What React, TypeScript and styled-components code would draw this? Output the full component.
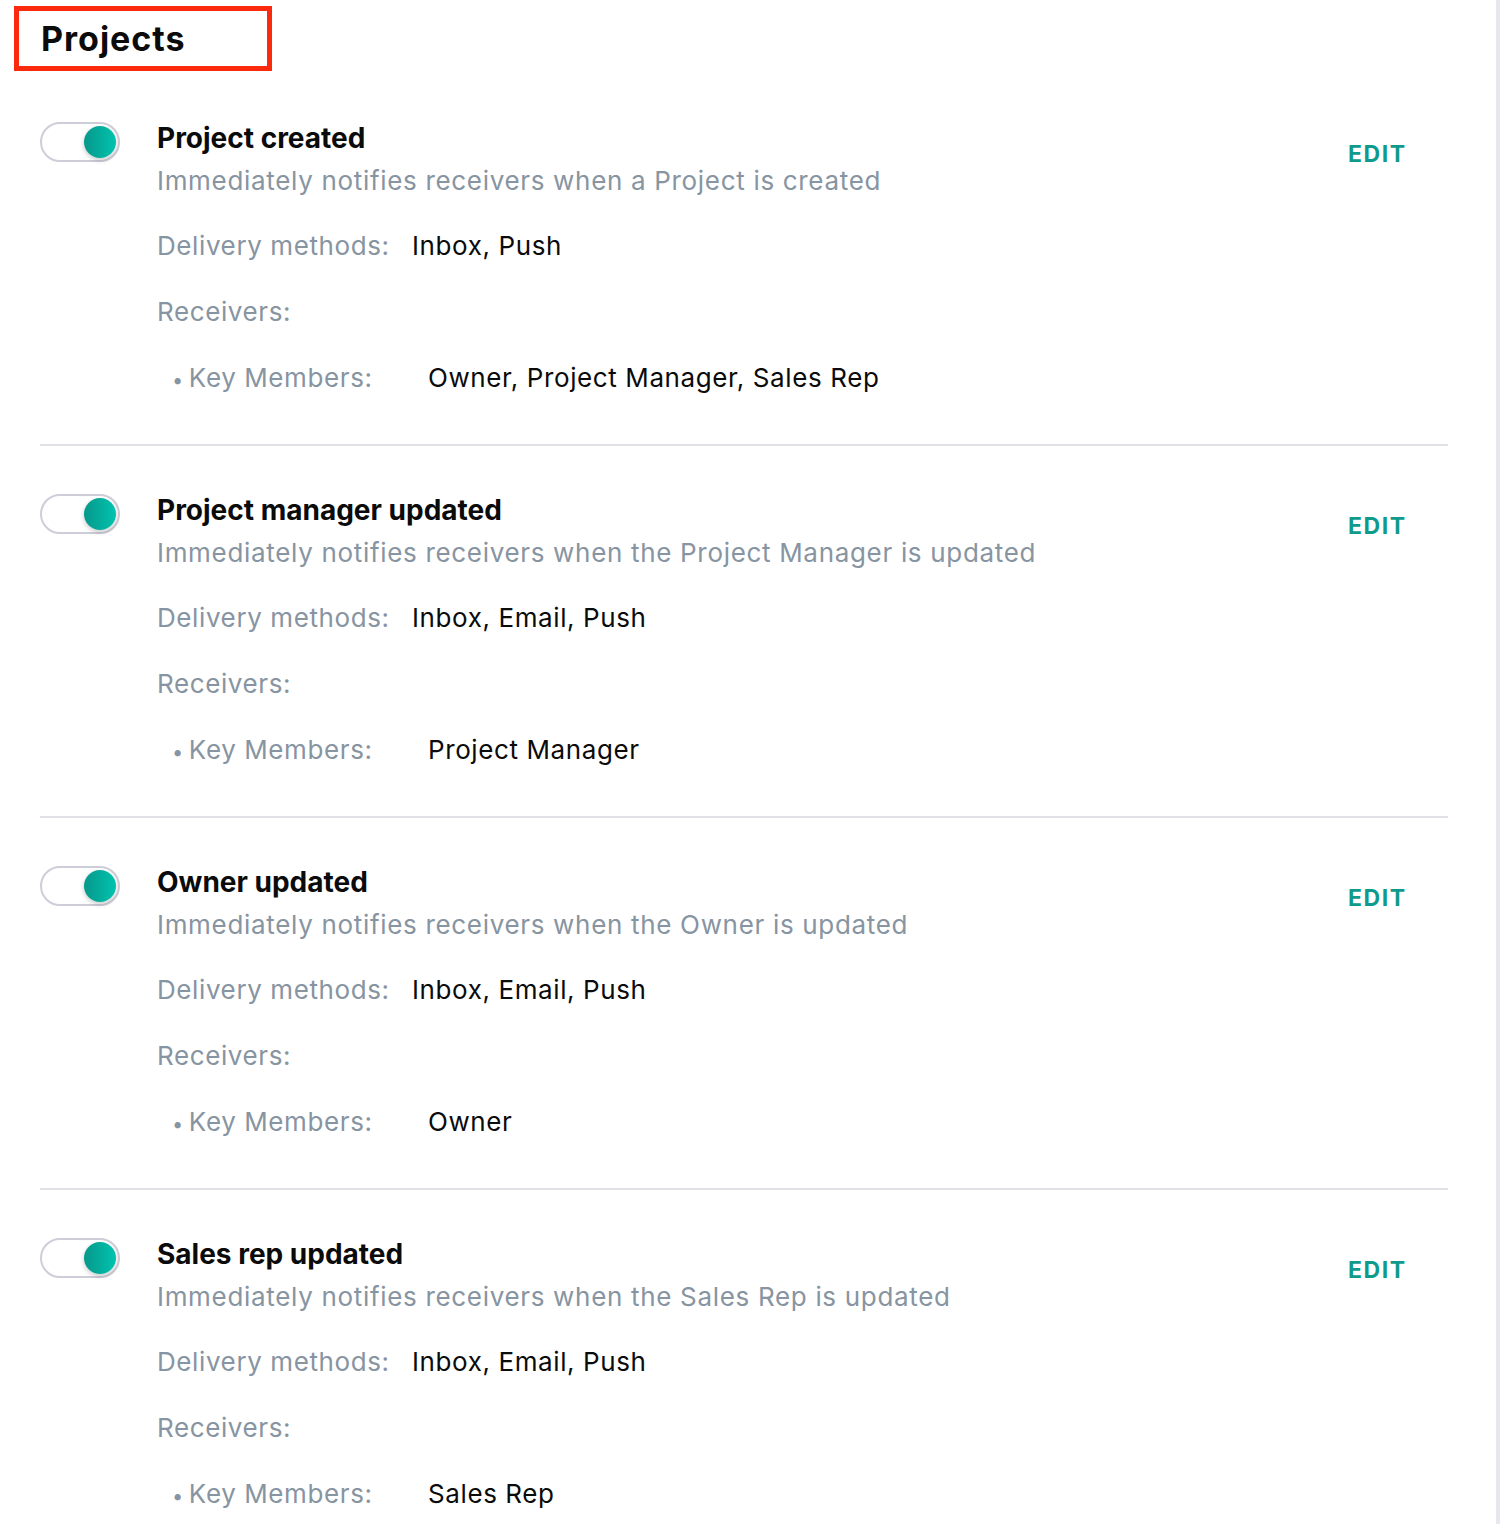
import React from "react";
import styled, { createGlobalStyle } from "styled-components";

const Global = createGlobalStyle`
  html, body { margin: 0; padding: 0; background: #ffffff; }
  body { font-family: Inter, "Open Sans", "Liberation Sans", sans-serif; -webkit-font-smoothing: antialiased; }
  * { box-sizing: border-box; }
`;

const Page = styled.div`
  width: 1500px;
  min-height: 1524px;
  border-right: 4px solid #e8e7ef;
  padding: 6px 48px 0 0;
`;

const HeaderBox = styled.div`
  margin-left: 14px;
  width: 258px;
  height: 65px;
  border: 5px solid #fb2a0c;
  padding-left: 22px;
  display: flex;
  align-items: center;
`;

const PageTitle = styled.h1`
  margin: 0;
  font-size: 34px;
  font-weight: 700;
  letter-spacing: 1px;
  color: #0b0b0b;
`;

const List = styled.div`
  margin-top: 51px;
  padding-left: 40px;
`;

const Section = styled.section<{ $first?: boolean; $last?: boolean }>`
  display: flex;
  align-items: flex-start;
  padding: ${(p) => (p.$first ? "0" : "48px")} 0 48px 0;
  border-bottom: ${(p) => (p.$last ? "none" : "2px solid #e2e1e8")};
`;

const Track = styled.div`
  flex: none;
  width: 80px;
  height: 40px;
  border: 2px solid #cfcdd8;
  border-radius: 20px;
  background: #ffffff;
  position: relative;
  margin-right: 37px;
`;

const Knob = styled.div`
  position: absolute;
  right: 2px;
  top: 2px;
  width: 32px;
  height: 32px;
  border-radius: 50%;
  background: linear-gradient(90deg, #07988a 0%, #00c3af 100%);
  box-shadow: 0 2px 5px rgba(0, 0, 0, 0.22);
`;

const Body = styled.div`
  flex: 1;
  display: flex;
  flex-direction: column;
`;

const Title = styled.h2`
  margin: 0;
  height: 32px;
  font-size: 28px;
  line-height: 33px;
  font-weight: 700;
  color: #0b0b0b;
`;

const Desc = styled.p`
  margin: 8px 0 0 0;
  height: 36px;
  font-size: 26px;
  line-height: 37px;
  letter-spacing: 0.68px;
  color: #8794a1;
`;

const Row = styled.div<{ $indent?: boolean }>`
  display: flex;
  height: 36px;
  margin-top: 30px;
  padding-left: ${(p) => (p.$indent ? "15px" : "0")};
  font-size: 26px;
  line-height: 36px;
  letter-spacing: 0.6px;
`;

const Label = styled.span<{ $width?: number }>`
  flex: none;
  width: ${(p) => (p.$width ? `${p.$width}px` : "auto")};
  color: #8794a1;
`;

const Value = styled.span`
  color: #0b0b0b;
`;

const Bullet = styled.span`
  font-size: 20px;
  line-height: 1;
  margin-right: 5px;
`;

const Edit = styled.button`
  flex: none;
  margin: 18px 41.5px 0 0;
  padding: 0;
  border: none;
  background: none;
  font-family: inherit;
  font-size: 23px;
  line-height: 28px;
  font-weight: 700;
  letter-spacing: 1.5px;
  color: #0f9a8b;
  cursor: pointer;
`;

type Item = { title: string; desc: string; methods: string; members: string };

const items: Item[] = [
  {
    title: "Project created",
    desc: "Immediately notifies receivers when a Project is created",
    methods: "Inbox, Push",
    members: "Owner, Project Manager, Sales Rep",
  },
  {
    title: "Project manager updated",
    desc: "Immediately notifies receivers when the Project Manager is updated",
    methods: "Inbox, Email, Push",
    members: "Project Manager",
  },
  {
    title: "Owner updated",
    desc: "Immediately notifies receivers when the Owner is updated",
    methods: "Inbox, Email, Push",
    members: "Owner",
  },
  {
    title: "Sales rep updated",
    desc: "Immediately notifies receivers when the Sales Rep is updated",
    methods: "Inbox, Email, Push",
    members: "Sales Rep",
  },
];

export default function App() {
  return (
    <>
      <Global />
      <Page>
        <HeaderBox>
          <PageTitle>Projects</PageTitle>
        </HeaderBox>
        <List>
          {items.map((it, i) => (
            <Section key={it.title} $first={i === 0} $last={i === items.length - 1}>
              <Track>
                <Knob />
              </Track>
              <Body>
                <Title>{it.title}</Title>
                <Desc>{it.desc}</Desc>
                <Row>
                  <Label $width={255}>Delivery methods:</Label>
                  <Value>{it.methods}</Value>
                </Row>
                <Row>
                  <Label>Receivers:</Label>
                </Row>
                <Row $indent>
                  <Label $width={256}>
                    <Bullet>•</Bullet>Key Members:
                  </Label>
                  <Value>{it.members}</Value>
                </Row>
              </Body>
              <Edit>EDIT</Edit>
            </Section>
          ))}
        </List>
      </Page>
    </>
  );
}
